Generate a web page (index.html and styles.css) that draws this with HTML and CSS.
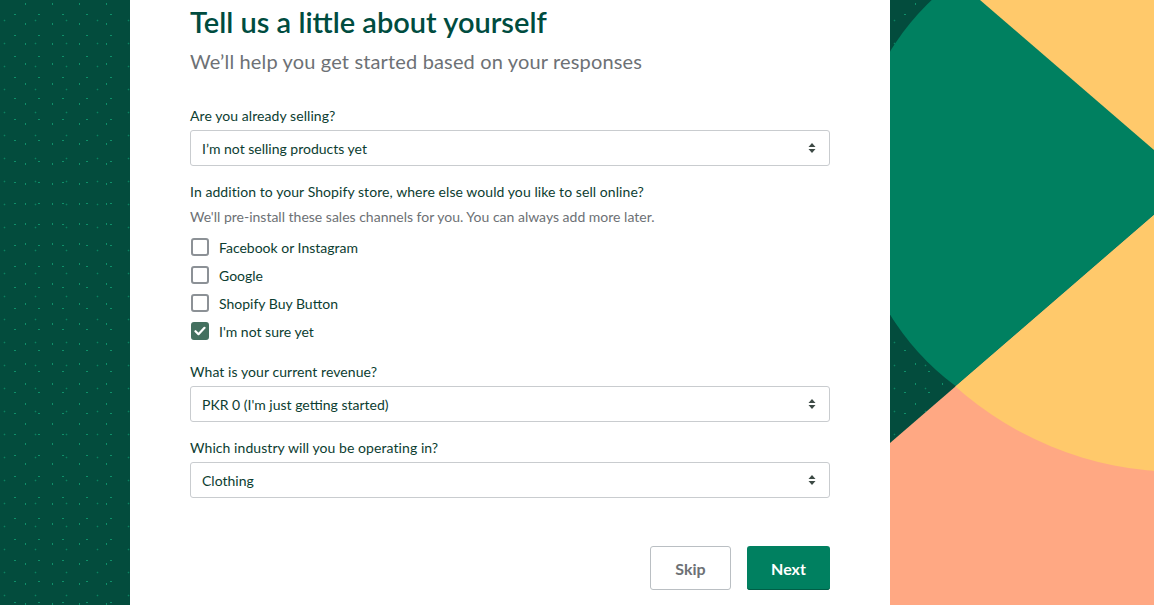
FILE: index.html
```html
<!DOCTYPE html>
<html lang="en">
<head>
<meta charset="utf-8">
<title>Tell us a little about yourself</title>
<link rel="stylesheet" href="styles.css">
</head>
<body>
<div class="page">
  <aside class="strip dotted"></aside>
  <main class="main">
    <h1 class="title">Tell us a little about yourself</h1>
    <p class="subtitle">We’ll help you get started based on your responses</p>

    <div class="field">
      <div class="label">Are you already selling?</div>
      <div class="select">
        <span>I’m not selling products yet</span>
        <svg class="arrows" width="8" height="12" viewBox="0 0 8 12"><path d="M4 1 L7.5 5 H0.5 Z M4 11 L0.5 7 H7.5 Z" fill="#3d4a45"/></svg>
      </div>
    </div>

    <div class="field channels">
      <div class="label">In addition to your Shopify store, where else would you like to sell online?</div>
      <div class="help">We'll pre-install these sales channels for you. You can always add more later.</div>
      <div class="checks">
        <label class="check"><span class="box"></span><span>Facebook or Instagram</span></label>
        <label class="check"><span class="box"></span><span>Google</span></label>
        <label class="check"><span class="box"></span><span>Shopify Buy Button</span></label>
        <label class="check"><span class="box on"><svg width="12" height="10" viewBox="0 0 12 10"><path d="M1.5 5.2 L4.5 8.2 L10.5 1.8" fill="none" stroke="#fff" stroke-width="2.2" stroke-linecap="round" stroke-linejoin="round"/></svg></span><span>I'm not sure yet</span></label>
      </div>
    </div>

    <div class="field">
      <div class="label">What is your current revenue?</div>
      <div class="select">
        <span>PKR 0 (I'm just getting started)</span>
        <svg class="arrows" width="8" height="12" viewBox="0 0 8 12"><path d="M4 1 L7.5 5 H0.5 Z M4 11 L0.5 7 H7.5 Z" fill="#3d4a45"/></svg>
      </div>
    </div>

    <div class="field">
      <div class="label">Which industry will you be operating in?</div>
      <div class="select">
        <span>Clothing</span>
        <svg class="arrows" width="8" height="12" viewBox="0 0 8 12"><path d="M4 1 L7.5 5 H0.5 Z M4 11 L0.5 7 H7.5 Z" fill="#3d4a45"/></svg>
      </div>
    </div>

    <div class="actions">
      <button class="btn skip">Skip</button>
      <button class="btn next">Next</button>
    </div>
  </main>
  <aside class="art dotted">
    <svg class="shapes" width="264" height="605" viewBox="0 0 264 605">
      <defs>
        <clipPath id="below">
          <polygon points="264,215 0,443 0,605 264,605"/>
        </clipPath>
      </defs>
      <circle cx="215" cy="183" r="252" fill="#008060"/>
      <polygon points="90,0 264,0 264,150" fill="#ffc96b"/>
      <polygon points="264,215 0,443 0,605 264,605" fill="#ffa883"/>
      <circle cx="290" cy="134" r="338" fill="#ffc96b" clip-path="url(#below)"/>
    </svg>
  </aside>
</div>
</body>
</html>
```

FILE: styles.css
```css
* { box-sizing: border-box; }
html, body { margin: 0; padding: 0; }
body {
  width: 1154px;
  height: 605px;
  overflow: hidden;
  font-family: Lato, "Noto Sans", sans-serif;
  color: #0c3d31;
  background: #fff;
}
.page {
  display: flex;
  height: 605px;
}
.dotted {
  background-color: #034c3d;
  background-image:
    radial-gradient(circle, #0f8f69 0.7px, transparent 1.1px),
    radial-gradient(circle, #0f8f69 0.7px, transparent 1.1px),
    radial-gradient(circle, #0b8260 0.7px, transparent 1.1px);
  background-size: 24px 21px, 27px 20px, 31px 23px;
  background-position: 3px 4px, 12px 14px, 20px 9px;
}
.strip {
  width: 130px;
  flex: none;
}
.main {
  width: 760px;
  flex: none;
  padding: 4px 60px 0 60px;
}
.title {
  margin: 0;
  font-size: 29px;
  line-height: 36px;
  font-weight: 600;
  color: #004c3f;
}
.subtitle {
  margin: 7px 0 0;
  font-size: 20px;
  line-height: 28px;
  letter-spacing: 0.15px;
  color: #6d7175;
}
.field { margin-top: 16px; }
.field:first-of-type { margin-top: 31px; }
.label {
  font-size: 14px;
  line-height: 20px;
  letter-spacing: 0.07px;
  color: #0c3d31;
}
.select {
  margin-top: 4px;
  height: 36px;
  border: 1px solid #c9cccf;
  border-radius: 3px;
  display: flex;
  align-items: center;
  justify-content: space-between;
  padding: 0 13px 0 11px;
  font-size: 14px;
  color: #0c3d31;
}
.help {
  margin-top: 5px;
  font-size: 14px;
  line-height: 20px;
  color: #6d7175;
}
.checks {
  margin-top: 6px;
  padding-bottom: 1px;
  display: flex;
  flex-direction: column;
}
.check {
  height: 28px;
  display: flex;
  align-items: center;
  gap: 10px;
  font-size: 14px;
  color: #0c3d31;
}
.box {
  width: 18px;
  height: 18px;
  margin-left: 1px;
  border: 2px solid #8c9196;
  border-radius: 3px;
  display: flex;
  align-items: center;
  justify-content: center;
}
.box.on {
  background: #44705f;
  border-color: #44705f;
}
.actions {
  margin-top: 48px;
  display: flex;
  justify-content: flex-end;
  gap: 16px;
}
.btn {
  height: 44px;
  border-radius: 3px;
  font-family: inherit;
  font-size: 16px;
  font-weight: 700;
  cursor: pointer;
}
.skip {
  width: 81px;
  background: #fff;
  border: 1px solid #babfc3;
  color: #6d7175;
}
.next {
  width: 83px;
  background: #008060;
  border: 0;
  color: #fff;
  box-shadow: inset 0 -1px 0 #005e46;
}
.art {
  width: 264px;
  flex: none;
  overflow: hidden;
}
.shapes { display: block; }
```
